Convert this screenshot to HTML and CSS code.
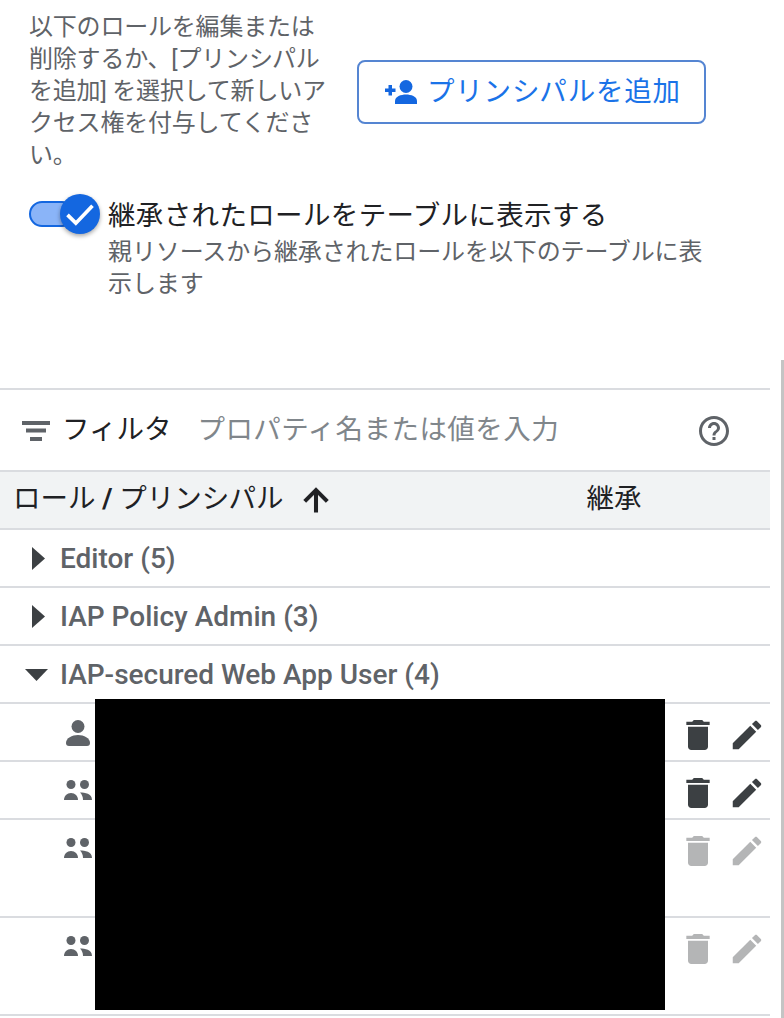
FILE: index.html
```html
<!DOCTYPE html>
<html lang="ja">
<head>
<meta charset="utf-8">
<title>ロール / プリンシパル</title>
<link rel="stylesheet" href="styles.css">
</head>
<body>
<section class="intro">
  <p class="intro-text">以下のロールを編集または削除するか、[プリンシパルを追加] を選択して新しいアクセス権を付与してください。</p>
  <button class="add-btn">
    <svg class="add-icon" viewBox="0 0 32 24"><circle cx="21" cy="6.500" r="6.500"/><path d="M10 21c0-4.500 6-6.500 11-6.500S32 16.500 32 21v3H10z"/><path d="M3.500 5h3.500v3.500h3.500v3.500H7v3.500H3.500V12H0V8.500h3.500z"/></svg>
    <span class="add-text">プリンシパルを追加</span>
  </button>
</section>
<section class="toggle-row">
  <div class="toggle">
    <span class="track"></span>
    <span class="thumb"><svg viewBox="0 0 24 24"><path d="M4.500 12.500l5 5L19.500 7" fill="none" stroke="#fff" stroke-width="2.200"/></svg></span>
  </div>
  <div class="toggle-text">
    <div class="toggle-label">継承されたロールをテーブルに表示する</div>
    <div class="toggle-desc">親リソースから継承されたロールを以下のテーブルに表示します</div>
  </div>
</section>
<section class="table-wrap">
  <div class="table">
    <div class="filter-row">
      <svg class="filter-icon" viewBox="0 0 28 20"><rect width="28" height="4"/><rect x="4" y="7.500" width="20" height="4"/><rect x="8" y="16" width="12" height="4"/></svg>
      <span class="filter-label">フィルタ</span>
      <span class="filter-ph">プロパティ名または値を入力</span>
      <svg class="help-icon" viewBox="0 0 24 24"><path d="M11 18h2v-2h-2v2zm1-16C6.48 2 2 6.48 2 12s4.48 10 10 10 10-4.48 10-10S17.52 2 12 2zm0 18c-4.41 0-8-3.59-8-8s3.59-8 8-8 8 3.59 8 8-3.59 8-8 8zm0-14c-2.21 0-4 1.79-4 4h2c0-1.1.9-2 2-2s2 .9 2 2c0 2-3 1.75-3 5h2c0-2.25 3-2.5 3-5 0-2.21-1.79-4-4-4z"/></svg>
    </div>
    <div class="head-row">
      <span class="head-role">ロール <b>/</b> プリンシパル</span>
      <svg class="sort-icon" viewBox="0 0 24 24"><path d="M4 12l1.41 1.41L11 7.83V20h2V7.83l5.58 5.59L20 12l-8-8-8 8z"/></svg>
      <span class="head-inherit">継承</span>
    </div>
    <div class="group-row">
      <span class="caret-cell"><svg class="caret-right" viewBox="0 0 13 23"><polygon points="0,0 13,11.5 0,23"/></svg></span>
      <span>Editor (5)</span>
    </div>
    <div class="group-row">
      <span class="caret-cell"><svg class="caret-right" viewBox="0 0 13 23"><polygon points="0,0 13,11.5 0,23"/></svg></span>
      <span>IAP Policy Admin (3)</span>
    </div>
    <div class="group-row">
      <span class="caret-cell"><svg class="caret-down" viewBox="0 0 23 12"><polygon points="0,0 23,0 11.5,12"/></svg></span>
      <span>IAP-secured Web App User (4)</span>
    </div>
    <div class="member-row">
      <svg class="member-icon person" viewBox="0 0 24 26"><circle cx="12" cy="6.5" r="6.5"/><path d="M0 23c0-5 6-8 12-8s12 3 12 8c0 2-1 3-3 3H3c-2 0-3-1-3-3z"/></svg>
      <div class="actions">
        <svg class="trash" viewBox="0 0 24 24"><path d="M6 19c0 1.1.9 2 2 2h8c1.1 0 2-.9 2-2V7H6v12zM19 4h-3.5l-1-1h-5l-1 1H5v2h14V4z"/></svg>
        <svg class="pencil" viewBox="0 0 24 24"><path d="M3 17.25V21h3.75L17.81 9.94l-3.75-3.75L3 17.25zM20.71 7.04c.39-.39.39-1.02 0-1.41l-2.34-2.34c-.39-.39-1.02-.39-1.41 0l-1.83 1.83 3.75 3.75 1.83-1.83z"/></svg>
      </div>
    </div>
    <div class="member-row">
      <svg class="member-icon group" viewBox="0 0 28 20"><circle cx="7" cy="4.5" r="4.5"/><circle cx="20.500" cy="4.500" r="4.500"/><path d="M0 20c0-4 3-7 7-7s7 3 7 7z"/><path d="M16 12.500c5 0 12 1 12 7.500h-9c0-3-1-5.500-3-7.500z"/></svg>
      <div class="actions">
        <svg class="trash" viewBox="0 0 24 24"><path d="M6 19c0 1.1.9 2 2 2h8c1.1 0 2-.9 2-2V7H6v12zM19 4h-3.5l-1-1h-5l-1 1H5v2h14V4z"/></svg>
        <svg class="pencil" viewBox="0 0 24 24"><path d="M3 17.25V21h3.75L17.81 9.94l-3.75-3.75L3 17.25zM20.71 7.04c.39-.39.39-1.02 0-1.41l-2.34-2.34c-.39-.39-1.02-.39-1.41 0l-1.83 1.83 3.75 3.75 1.83-1.83z"/></svg>
      </div>
    </div>
    <div class="member-row tall">
      <svg class="member-icon group" viewBox="0 0 28 20"><circle cx="7" cy="4.5" r="4.5"/><circle cx="20.500" cy="4.500" r="4.500"/><path d="M0 20c0-4 3-7 7-7s7 3 7 7z"/><path d="M16 12.500c5 0 12 1 12 7.500h-9c0-3-1-5.500-3-7.500z"/></svg>
      <div class="actions disabled">
        <svg class="trash" viewBox="0 0 24 24"><path d="M6 19c0 1.1.9 2 2 2h8c1.1 0 2-.9 2-2V7H6v12zM19 4h-3.5l-1-1h-5l-1 1H5v2h14V4z"/></svg>
        <svg class="pencil" viewBox="0 0 24 24"><path d="M3 17.25V21h3.75L17.81 9.94l-3.75-3.75L3 17.25zM20.71 7.04c.39-.39.39-1.02 0-1.41l-2.34-2.34c-.39-.39-1.02-.39-1.41 0l-1.83 1.83 3.75 3.75 1.83-1.83z"/></svg>
      </div>
    </div>
    <div class="member-row tall">
      <svg class="member-icon group" viewBox="0 0 28 20"><circle cx="7" cy="4.5" r="4.5"/><circle cx="20.500" cy="4.500" r="4.500"/><path d="M0 20c0-4 3-7 7-7s7 3 7 7z"/><path d="M16 12.500c5 0 12 1 12 7.500h-9c0-3-1-5.500-3-7.500z"/></svg>
      <div class="actions disabled">
        <svg class="trash" viewBox="0 0 24 24"><path d="M6 19c0 1.1.9 2 2 2h8c1.1 0 2-.9 2-2V7H6v12zM19 4h-3.5l-1-1h-5l-1 1H5v2h14V4z"/></svg>
        <svg class="pencil" viewBox="0 0 24 24"><path d="M3 17.25V21h3.75L17.81 9.94l-3.75-3.75L3 17.25zM20.71 7.04c.39-.39.39-1.02 0-1.41l-2.34-2.34c-.39-.39-1.02-.39-1.41 0l-1.83 1.83 3.75 3.75 1.83-1.83z"/></svg>
      </div>
    </div>
    <div class="redaction"></div>
  </div>
</section>
</body>
</html>
```

FILE: styles.css
```css
* { box-sizing: border-box; }
html, body { margin: 0; height: 1018px; overflow: hidden; background: #fff; }
body { font-family: Roboto, "Noto Sans CJK JP", sans-serif; color: #202124; position: relative; }

.intro { display: flex; align-items: center; height: 160px; margin-top: 11px; padding-left: 29px; }
.intro-text { margin: 0; width: 304px; font-size: 24px; line-height: 32px; letter-spacing: -0.2px; color: #5f6368; }
.add-btn { display: flex; align-items: center; gap: 10px; width: 349px; height: 64px; margin: 2px 0 0 24px; padding: 0 0 0 26px; background: #fff; border: 2px solid #5585d2; border-radius: 8px; color: #1a73e8; font: inherit; font-size: 27.5px; letter-spacing: .8px; }
.add-icon { width: 32px; height: 24px; fill: #1467e0; flex: none; }
.add-text { margin-top: -6px; }

.toggle-row { display: flex; margin-top: 27px; padding-left: 29px; }
.toggle { position: relative; width: 79px; height: 32px; flex: none; }
.track { position: absolute; left: 0; top: 3px; width: 46px; height: 26px; background: #8ab4f8; border: 2px solid #1467e0; border-radius: 13px; }
.thumb { position: absolute; left: 31px; top: -4px; width: 40px; height: 40px; border-radius: 50%; background: #1467e0; box-shadow: 0 2px 4px rgba(0,0,0,.35); display: flex; align-items: center; justify-content: center; }
.thumb svg { width: 40px; height: 40px; }
.toggle-label { padding-top: 2px; font-size: 27.5px; line-height: 32px; letter-spacing: .35px; color: #202124; }
.toggle-desc { width: 604px; margin-top: 4px; font-size: 24px; line-height: 32px; letter-spacing: -0.12px; color: #5f6368; }

.table-wrap { margin-top: 60px; height: 659px; padding: 28px 11px 0 0; border-right: 3px solid #c4c4c4; }
.table { position: relative; width: 770px; border-top: 2px solid #dadce0; }

.filter-row { display: flex; align-items: center; height: 82px; border-bottom: 2px solid #dadce0; padding-left: 22px; }
.filter-icon { width: 28px; height: 20px; margin-top: 2px; fill: #5f6368; flex: none; }
.filter-label { margin: -6px 0 0 12px; font-size: 27.5px; color: #202124; }
.filter-ph { margin: -6px 0 0 26px; font-size: 27.5px; letter-spacing: .45px; color: #80868b; }
.help-icon { width: 36px; height: 36px; fill: #5f6368; margin: 2px 38px 0 auto; flex: none; }

.head-row { display: flex; align-items: center; height: 58px; background: #f1f3f4; border-bottom: 2px solid #dadce0; padding-left: 13px; font-size: 27.5px; color: #202124; }
.head-role, .head-inherit { margin-top: -8px; }
.head-role b { font-weight: 700; }
.sort-icon { width: 36px; height: 36px; margin-left: 14px; flex: none; fill: #202124; stroke: #202124; stroke-width: .7; }
.head-inherit { margin-left: 253px; }

.group-row { display: flex; align-items: center; height: 58px; border-bottom: 2px solid #dadce0; font-size: 28px; font-weight: 500; color: #5f6368; }
.caret-cell { display: flex; align-items: center; justify-content: center; width: 60px; padding-left: 12px; flex: none; }
.caret-right { width: 13px; height: 23px; fill: #3c4043; margin-left: 5px; }
.caret-down { width: 23px; height: 12px; fill: #3c4043; margin-top: 2px; }

.member-row { display: flex; justify-content: space-between; height: 58px; border-bottom: 2px solid #dadce0; padding: 16px 0 0 64px; }
.member-row.tall { height: 98px; }
.member-icon { fill: #5f6368; flex: none; }
.person { width: 24px; height: 26px; margin-left: 2px; }
.group { width: 28px; height: 20px; margin-top: 2px; }
.actions { display: flex; align-items: center; height: 28px; margin-top: 1px; gap: 10px; padding-right: 4px; }
.actions svg { fill: #3c4043; flex: none; }
.actions.disabled svg { fill: #b4b5b6; }
.trash { width: 40px; height: 40px; }
.pencil { width: 38px; height: 38px; }

.redaction { position: absolute; left: 95px; top: 309px; width: 570px; height: 311px; background: #000; }
```
